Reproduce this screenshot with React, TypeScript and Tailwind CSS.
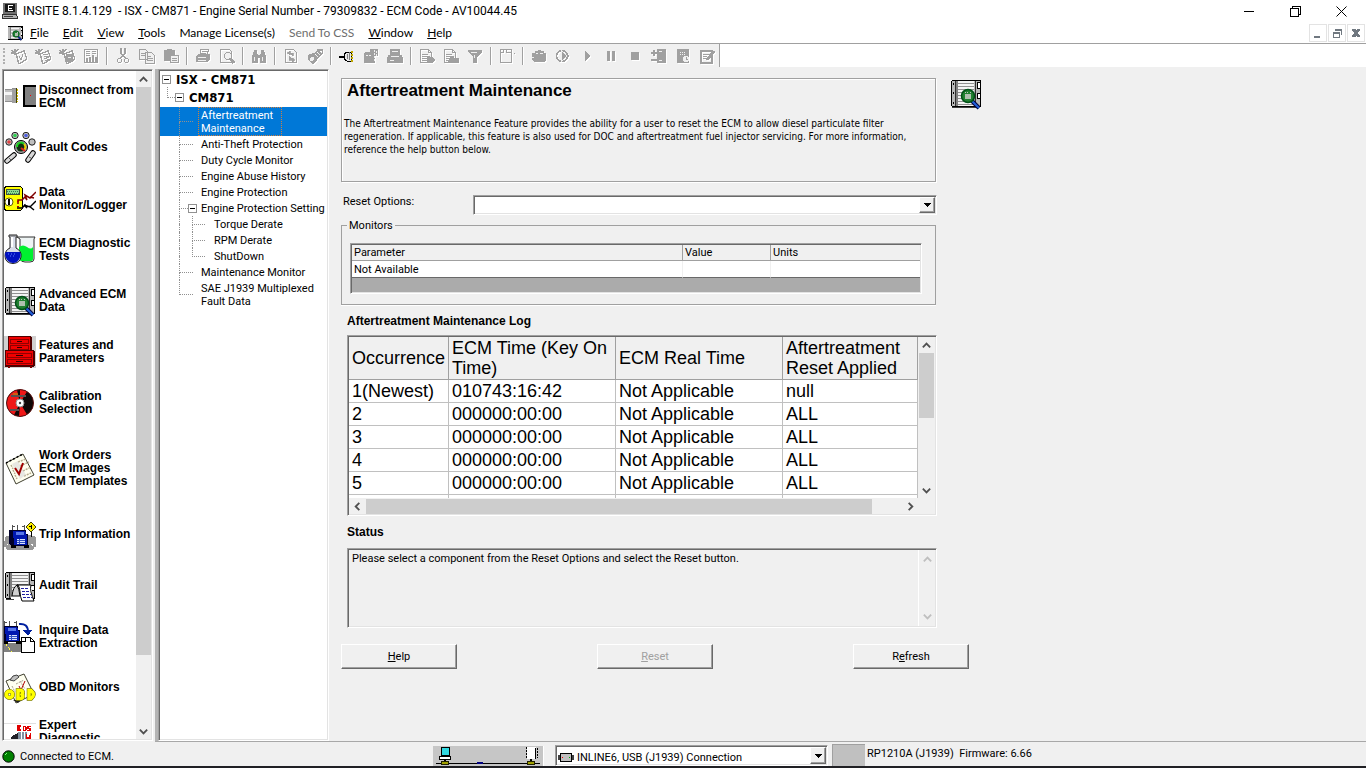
import { useState } from 'react';
import type { ReactNode } from 'react';
import clsx from 'clsx';

const SUNKEN =
  'border border-t-[#a0a0a0] border-l-[#a0a0a0] border-b-white border-r-white shadow-[inset_1px_1px_0_#696969,inset_-1px_-1px_0_#e3e3e3]';
const RAISED =
  'border border-t-white border-l-white border-b-[#696969] border-r-[#696969] shadow-[inset_-1px_-1px_0_#a0a0a0]';
const ETCHED = 'border border-[#a0a0a0] shadow-[1px_1px_0_#fff,inset_1px_1px_0_#fff]';

function Art({ children, className = 'w-8 h-8', box = '0 0 32 32' }: { children: ReactNode; className?: string; box?: string }) {
  return (
    <svg viewBox={box} className={clsx('shrink-0', className)} shapeRendering="crispEdges" fill="none" aria-hidden="true">
      {children}
    </svg>
  );
}

// ---- sidebar drawings (32 x 32) ----

function EcmModule() {
  return (
    <>
      <path d="M2 2h28l1 1v25l-1 1H2l-1-1V3z" fill="#000" />
      <path d="M2 3h28v25H2z" fill="#b8b8b8" />
      <path d="M6 3h2v25H6z" fill="#808080" />
      <path d="M8 3h16v25H8z" fill="#f4f4f4" />
      <path d="M8 5.500h16M8 8.500h16M8 11.500h16M8 14.500h16M8 17.500h16M8 20.500h16M8 23.500h16M8 26.500h16" stroke="#909090" />
      <path d="M5 3h1v25H5zM25 3h1v25h-1z" fill="#303030" />
      <path d="M3 5h1v2H3zM3 14h1v2H3zM3 24h1v2H3zM27 4h3v1h-3zM27 10h3v1h-3zM27 5h1v5h-1zM27 15h3v1h-3zM27 20h3v1h-3zM27 16h1v4h-1z" fill="#000" />
      <path d="M28 5h2v5h-2zM28 16h2v4h-2z" fill="#fff" />
      <path d="M2 29h27v1H2z" fill="#404040" />
    </>
  );
}

function EcmSearch() {
  return (
    <>
      <EcmModule />
      <path d="M22 23l7 7" stroke="#000040" strokeWidth="4" shapeRendering="auto" />
      <path d="M22 23l7 7" stroke="#2060d8" strokeWidth="2" shapeRendering="auto" />
      <circle cx="18" cy="18" r="6.500" fill="#208030" stroke="#005018" strokeWidth="1.500" shapeRendering="auto" />
      <path d="M15 16h6v5h-6z" fill="#b0c0b0" />
      <path d="M15 14h1v1h-1zM17 14h1v1h-1zM20 14h1v1h-1z" fill="#c0c0c0" />
    </>
  );
}

function Plug() {
  return (
    <>
      <path d="M1 9h8v12H1z" fill="#c0c0c0" />
      <path d="M1 11h7v3H1z" fill="#f4f4f4" />
      <path d="M8 7h4v15H8z" fill="#a0a0a0" />
      <path d="M1 8.500h7M1 20.500h7M8 7.500h4" stroke="#909090" />
      <path d="M12 7h1v15h-1z" fill="#404000" />
      <path d="M13.500 8v13" stroke="#d8c000" strokeDasharray="2 1" />
      <path d="M19 4h13v22H19z" fill="#000" />
      <path d="M21 6h11v18H21z" fill="#808080" />
      <path d="M26 14h1v1h-1z" fill="#f00" />
    </>
  );
}

function FaultLamps() {
  const lamps = [
    [5, 10, '#e04040'],
    [11, 3.5, '#30d050'],
    [22, 3.5, '#5060e0'],
    [28, 10, '#c0c0c0'],
  ] as const;
  return (
    <g shapeRendering="auto">
      {lamps.map(([x, y, fill]) => (
        <g key={x}>
          <circle cx={x} cy={y} r="3.200" fill="#c0c0c0" stroke="#202020" />
          <circle cx={x} cy={y} r="1.800" fill={fill} />
        </g>
      ))}
      <circle cx="17" cy="15" r="6.500" fill="#a0a0a0" stroke="#000" />
      <circle cx="17" cy="15" r="4.500" fill="#103010" />
      <path d="M13 15a4 4 0 0 1 7-3" stroke="#20d020" strokeWidth="2" />
      <path d="M20 12a4 4 0 0 1 0 6" stroke="#e8d000" strokeWidth="2" />
      <path d="M17 16l4 3" stroke="#e02020" strokeWidth="2" />
      <path d="M3 29l7-6M24 28l5-7" stroke="#000" strokeWidth="5.500" strokeLinecap="round" />
      <path d="M3 29l7-6M24 28l5-7" stroke="#d8d8d8" strokeWidth="3.500" strokeLinecap="round" />
      <path d="M5 26l2 2M25 25l2 1" stroke="#606060" />
    </g>
  );
}

function Multimeter() {
  return (
    <>
      <path d="M1.500 3.500h15l2 2v20l-2 2h-15l-1-2v-20z" fill="#ffff00" stroke="#000" />
      <path d="M2.500 6.500h13v5h-13z" fill="#90d890" stroke="#405040" />
      <path d="M3 8.500h12M4 10.500h11" stroke="#308050" strokeDasharray="1 1" />
      <circle cx="5" cy="19" r="4" fill="#fff" stroke="#606000" shapeRendering="auto" />
      <path d="M5 16v6" stroke="#000" strokeWidth="2" />
      <path d="M14 21v-4h4l3-3 2 3-2-5 5 3 6-6M26 14l4 1" stroke="#800000" strokeWidth="1.500" shapeRendering="auto" />
      <path d="M13 25h5l3-3 2 3-3-3 6 2 6-6M25 23l5 4" stroke="#000" strokeWidth="1.500" shapeRendering="auto" />
      <path d="M13 18h2M13 23h2" stroke="#c00000" />
    </>
  );
}

function Flasks() {
  return (
    <g shapeRendering="auto">
      <path d="M13 3l3 2v20q1 3 5 3h5q4 0 4-3V5l1-2z" fill="#eef4f4" stroke="#303030" />
      <path d="M15 13q4-3 8 0t6 0v12q0 2-3 2h-8q-3 0-3-3z" fill="#00f030" />
      <path d="M5 1h8v2h-1v11q6 3 5 9t-8 6.500Q1 29 1 22q0-6 5-8V3H5z" fill="#d8dce8" stroke="#202020" />
      <path d="M2 18h14q1.500 4 -1 7.500t-6 3.500q-5-.5-7-5t0-6z" fill="#0010c0" />
      <path d="M4 20h9M6 22h5" stroke="#6080ff" strokeDasharray="1 2" />
      <path d="M8 3v10" stroke="#fff" strokeWidth="2" />
      <path d="M5 2h8" stroke="#606060" />
    </g>
  );
}

function Drawers() {
  return (
    <>
      <path d="M0 0h32v32H0z" fill="#d0d0d0" />
      <path d="M4.500.5h22v14h-22zM1.500 14.500h28v15h-28z" fill="#f00000" stroke="#500000" />
      <path d="M26.500 1v13M29.500 15v15M1 29.500h29" stroke="#500000" strokeWidth="2" />
      <path d="M6.500 3.500h18v4h-18zM6.500 9.500h18v4h-18zM3.500 17.500h24v4h-24zM3.500 23.500h24v4h-24z" stroke="#900000" />
      <path d="M13 5.500h5M13 11.500h5M12 19.500h7M12 25.500h7" stroke="#300000" />
      <path d="M4 30h2v2H4zM26 30h2v2h-2z" fill="#800000" />
    </>
  );
}

function Disc() {
  return (
    <g shapeRendering="auto">
      <circle cx="16" cy="16" r="13.500" fill="#100808" />
      <path d="M16 16L13 3a13.500 13.500 0 0 0-3 25z" fill="#f01818" />
      <path d="M16 16V2.500a13.500 13.500 0 0 1 7 2zM16 16l7 11.500a13.500 13.500 0 0 1-8 2z" fill="#f01818" />
      <path d="M7 8h15v2H7zM6 22h9v2H6z" fill="#585050" />
      <path d="M9 7h5" stroke="#b0a000" />
      <circle cx="16" cy="16" r="4" fill="#fff" stroke="#909090" />
      <circle cx="16" cy="16" r="1.200" fill="#404040" />
      <circle cx="16" cy="16" r="13.500" stroke="#601010" />
    </g>
  );
}

function Checklist() {
  return (
    <g shapeRendering="auto">
      <path d="M2 10L19 1l11 21-18 9z" fill="#fffff0" stroke="#404030" />
      <path d="M2 10L19 1" stroke="#000" strokeWidth="1.500" strokeDasharray="2 2" />
      <path d="M7 12l2 4M9 17l2 4M11 22l2 4M14 9l8-3M16 13l9-4M19 18l8-4M20 23l7-3" stroke="#b8ae90" strokeWidth="1.500" strokeDasharray="2 1" />
      <path d="M8 11l6-3 8 14-6 4z" fill="#d8d8d8" opacity=".6" />
      <path d="M11 15l4 6 4-11" stroke="#a00000" strokeWidth="2" />
    </g>
  );
}

function Truck() {
  return (
    <>
      <path d="M8.500 9V3M13.500 9V3M20.500 9V3M8 4.500h3M18 4.500h3" stroke="#505050" />
      <path d="M5 8h17v4h2v12H7l-2-3z" fill="#000028" />
      <path d="M9 9h12l2 5v9H10z" fill="#0018b0" />
      <path d="M12 10h8v3h-8z" fill="#5878e8" />
      <path d="M13 17h8v5h-8z" fill="#d8e0ff" />
      <path d="M13 18.500h8M13 20.500h8M15.500 17v5" stroke="#3050c0" />
      <path d="M7 23h5v3H7zM20 23h5v3h-5z" fill="#000" />
    </>
  );
}

function Trip() {
  return (
    <>
      <path d="M1 18l5-2h20l6 2v9l-4 4H3l-3-4z" fill="#989898" />
      <path d="M1 30l5-9M31 30l-4-6" stroke="#fff" strokeDasharray="2 2" />
      <g transform="translate(0 3)">
        <Truck />
      </g>
      <path d="M27 3l5 5-5 5-5-5z" fill="#ffee00" stroke="#404000" shapeRendering="auto" />
      <path d="M27 6v4M25 7h3M27.500 13v5" stroke="#000" />
    </>
  );
}

function AuditTrail() {
  return (
    <>
      <EcmModule />
      <path d="M10 16h18v16H15l-6-3H7z" fill="#fff" />
      <path d="M13 15h14q-1 3 0 7t3 9H18q-2-5-2-9t-2-7z" fill="#fff" stroke="#000" shapeRendering="auto" />
      <path d="M13 15q-4 2-5 11h8q-1-8-3-11z" fill="#d0d0d0" stroke="#000" shapeRendering="auto" />
      <path d="M17 18.500h8M18 21.500h8M18 24.500h9M19 27.500h9" stroke="#2020a0" strokeDasharray="3 1" />
    </>
  );
}

function Extraction() {
  return (
    <>
      <path d="M0 22h17v9H0z" fill="#808080" />
      <path d="M1 22l7 9" stroke="#ffff40" strokeDasharray="3 2" />
      <g transform="translate(-8 -3)">
        <Truck />
      </g>
      <path d="M15 3q9-1 9 8" stroke="#0020a0" strokeWidth="2" shapeRendering="auto" />
      <path d="M19 9h9l-4 6z" fill="#0020a0" />
      <path d="M17.500 16.500h9l4 4v11h-13z" fill="#fff" stroke="#000" />
      <path d="M17.500 16.500h4v4h-4zM26.500 16.500v4h4" stroke="#000" />
    </>
  );
}

function Obd() {
  return (
    <g shapeRendering="auto">
      <path d="M2 9L20 2l10 20-18 9z" fill="#fffff0" stroke="#404030" />
      <path d="M6 8l3-4 4-1 2 2-5 4z" fill="#c0c0c0" stroke="#404040" />
      <path d="M8 14l3 6M16 9l5 8M12 12l8-4" stroke="#a8a090" strokeDasharray="2 1" />
      <path d="M15 14l2 4 4-9" stroke="#b00000" />
      <path d="M9 28l5 3 3-3z" fill="#202020" />
      <circle cx="5.500" cy="22.500" r="3.200" stroke="#606000" strokeWidth="4.500" />
      <path d="M14 18.500v8h3q3-1 1-4 2-3-1-4zM25 18.500v8h2q5-4 0-8z" stroke="#606000" strokeWidth="4.500" />
      <circle cx="5.500" cy="22.500" r="3.200" stroke="#ffff00" strokeWidth="3.500" />
      <path d="M14 18.500v8h3q3-1 1-4 2-3-1-4zM25 18.500v8h2q5-4 0-8z" stroke="#ffff00" strokeWidth="3.500" />
    </g>
  );
}

function Expert() {
  return (
    <>
      <path d="M0 .5h32" stroke="#e0e0e0" />
      <path d="M13 3h4M13 5h3M13 7h4M13.500 3v5M19.500 3v5M19 3.500h2l1 1v2l-1 1h-2M27 3.500h-3v2h2v2h-3" stroke="#e00000" strokeWidth="1.500" />
      <path d="M7 14l8-5v15H7z" fill="#202028" />
      <path d="M14 9h9v14h-9z" fill="#8090a0" />
      <path d="M17 9v8M20 9v8" stroke="#fff" />
      <path d="M22 9l2 6 3-6v15h-4z" fill="#e00000" />
      <path d="M0 18h7v8H0z" fill="#d8d8d8" />
    </>
  );
}

const sidebarItems: { lines: string[]; art: ReactNode; tall?: boolean }[] = [
  { lines: ['Disconnect from', 'ECM'], art: <Plug /> },
  { lines: ['Fault Codes'], art: <FaultLamps /> },
  { lines: ['Data', 'Monitor/Logger'], art: <Multimeter /> },
  { lines: ['ECM Diagnostic', 'Tests'], art: <Flasks /> },
  { lines: ['Advanced ECM', 'Data'], art: <EcmSearch /> },
  { lines: ['Features and', 'Parameters'], art: <Drawers /> },
  { lines: ['Calibration', 'Selection'], art: <Disc /> },
  { lines: ['Work Orders', 'ECM Images', 'ECM Templates'], art: <Checklist />, tall: true },
  { lines: ['Trip Information'], art: <Trip /> },
  { lines: ['Audit Trail'], art: <AuditTrail /> },
  { lines: ['Inquire Data', 'Extraction'], art: <Extraction /> },
  { lines: ['OBD Monitors'], art: <Obd /> },
  { lines: ['Expert', 'Diagnostic', '\u00a0'], art: <Expert /> },
];

// ---- toolbar drawings (16 x 16), null is a divider ----

const G = '#a0a0a0';

const page = <path d="M1.500 1.500h8l3 3v10h-11zM9.500 1.500v3h3M3 6.500h6M3 8.500h8M3 10.500h8M3 12.500h5" stroke={G} />;
const tiltedPage = <path d="M5 6l8-3 3 8-8 5zM1 2l2 3M4 1v4M0 5h5M7 1L5 4M3 5l2 2" stroke={G} strokeWidth="1.500" />;

const tools: ({ name: string; art: ReactNode; live?: boolean } | null)[] = [
  { name: 'New work order', art: <>{tiltedPage}<path d="M8 8l2 4 2-6" stroke={G} /></> },
  { name: 'Open work order', art: <>{tiltedPage}<path d="M8 7l5-1M9 9l5-1M9 11l5-2M10 13l4-2" stroke={G} /></> },
  { name: 'Work order image', art: <>{tiltedPage}<path d="M7 6h7v8H7z" fill={G} /><path d="M9 9h3" stroke="#f0f0f0" /></> },
  { name: 'Dashboard', art: <><path d="M1.500 1.500h13v13h-13z" stroke={G} /><path d="M3 3.500h4M3 5.500h4M3 7.500h4M9 3.500h4M9 5.500h4" stroke={G} /><path d="M3 10h2v4H3zM6 9h2v5H6zM9 7h2v7H9zM12 9h2v5h-2z" fill={G} /></> },
  null,
  { name: 'Cut', art: <><path d="M6 0v5l4 5M10 0v5l-4 5" stroke={G} strokeWidth="1.500" /><circle cx="4.500" cy="12.500" r="2" stroke={G} /><circle cx="11.500" cy="12.500" r="2" stroke={G} /></> },
  { name: 'Copy', art: <path d="M.5 1.500h6l2 2v8h-8zM2 5.500h4M2 7.500h4M6.500 4.500h6l3 3v8h-9zM8 8.500h4M8 10.500h6M8 12.500h6" fill="#f0f0f0" stroke={G} /> },
  { name: 'Paste', art: <><path d="M1 2h3V1h5v1h3v11H1z" fill={G} /><path d="M7.500 7.500h8v7h-8z" fill="#f0f0f0" stroke={G} /><path d="M9 10h5M9 12h5" stroke={G} /></> },
  null,
  { name: 'Print', art: <><path d="M5 6l1-5h8l-2 5" stroke={G} /><path d="M7 3h5M6 5h5" stroke={G} /><path d="M3 6h12v5l-3 3H1V9z" fill={G} /><path d="M3 9h8M3 12h8" stroke="#f0f0f0" /></> },
  { name: 'Print preview', art: <><path d="M1.500 1.500h9l2 2v11h-11z" stroke={G} /><circle cx="9" cy="8" r="3.500" stroke={G} fill="#f0f0f0" /><path d="M11 10l4 5" stroke={G} strokeWidth="3" /></> },
  null,
  { name: 'Find', art: <><path d="M3 2h3v3l1 2v8H1V9zM10 2h3l2 7v6H9V7l1-2z" fill={G} /><path d="M6 7h4v3H6z" fill={G} /><path d="M3 9v4M11 9v4" stroke="#f0f0f0" /></> },
  null,
  { name: 'Refresh', art: <><path d="M2.500 1.500h8l3 3v10h-11z" stroke={G} /><path d="M10 8V5H6M4 5l3-2v4zM6 8v4h4M12 12l-3-2v4z" stroke={G} fill={G} strokeWidth=".8" /></> },
  { name: 'Satellite', art: <><path d="M1 7l5-2 5 5-2 4-3 2-5-4z" fill={G} /><path d="M7 7l4-5h5v3l-6 5M9 5l3 3M11 3l3 3" stroke={G} strokeWidth="1.500" /><circle cx="5" cy="11" r="2" fill="#f0f0f0" /></> },
  null,
  { name: 'Connect', live: true, art: <><path d="M0 9h5" stroke="#000" strokeWidth="2" /><path d="M5 6l3-2h4v9H8L5 11z" fill="#e8e8e8" stroke="#000" /><path d="M8 6v5M10 4v8" stroke="#808080" /><path d="M13 3v11" stroke="#c0a800" strokeWidth="2" strokeDasharray="2 1" /></> },
  { name: 'Transfer', art: <><path d="M2 4h5V1h8v7h-3v7H1V7z" fill={G} /><path d="M11.500 2v12M13.500 3v5M3 7.500h5" stroke="#f0f0f0" strokeDasharray="2 1" /></> },
  { name: 'Phone', art: <><path d="M3 1h10v6h2l1 4v4H0v-4l1-4h2z" fill={G} /><path d="M5 3.500h6M4 8.500h8M3 12.500h4" stroke="#f0f0f0" /></> },
  null,
  { name: 'Report', art: <>{page}<path d="M8 9h5l3 3-3 3H8z" fill={G} /></> },
  { name: 'Open report', art: <>{page}<path d="M7 9h3l1 1h5v5H5z" fill={G} /></> },
  { name: 'Filter', art: <><path d="M1 2h14v2l-5 5v6H6V9L1 4z" fill={G} /><path d="M4 4h6M7 7v3" stroke="#f0f0f0" /></> },
  null,
  { name: 'Layout', art: <path d="M1.500 1.500h11v13h-11zM1 4h3V1M7 1v3h5M15 5v1" stroke={G} /> },
  null,
  { name: 'Snapshot', art: <><path d="M1 5h3V3h3V2h3v1h3v2h2v7l-2 2H3l-2-2z" fill={G} /><path d="M5 5h2M9 5h3M1 9h2" stroke="#f0f0f0" /></> },
  { name: 'Record', art: <><circle cx="7" cy="8" r="5.500" stroke={G} strokeWidth="1.500" /><path d="M6 2l6 6-6 6z" fill={G} stroke="#f0f0f0" /><path d="M12 5l2 3-2 3z" fill={G} /></> },
  { name: 'Play', art: <path d="M6 3l5 5-5 5z" fill={G} /> },
  { name: 'Pause', art: <path d="M4 3h3v10H4zM9 3h3v10H9z" fill={G} /> },
  { name: 'Stop', art: <path d="M4 4h8v8H4z" fill={G} /> },
  { name: 'Adjust', art: <><path d="M6 1h9v14H6z" fill={G} /><path d="M0 5h6M3 2v6M0 12h6" stroke={G} strokeWidth="1.500" /><path d="M8 3.500h3M8 12.500h3" stroke="#f0f0f0" /></> },
  { name: 'Schedule', art: <><path d="M2 1h12v14H2z" fill={G} /><path d="M5 4h6M5 6h6" stroke="#f0f0f0" strokeDasharray="1 1" /><circle cx="11" cy="11" r="3" fill="#f0f0f0" /><path d="M11 9v2h2" stroke={G} /></> },
  { name: 'Annotate', art: <><path d="M2 3h11v12H2z" stroke={G} strokeWidth="2" /><path d="M4 6.500h6M4 8.500h4M4 10.500h3" stroke={G} /><path d="M15 3l-7 9" stroke={G} strokeWidth="3" /></> },
];

const menus = [
  { key: 'F', rest: 'ile' },
  { key: 'E', rest: 'dit' },
  { key: 'V', rest: 'iew' },
  { key: 'T', rest: 'ools' },
  { key: '', rest: 'Manage License(s)' },
  { key: '', rest: 'Send To CSS', disabled: true },
  { key: 'W', rest: 'indow' },
  { key: 'H', rest: 'elp' },
];

const leafNodes = ['Anti-Theft Protection', 'Duty Cycle Monitor', 'Engine Abuse History', 'Engine Protection'];
const settingNodes = ['Torque Derate', 'RPM Derate', 'ShutDown'];

const logRows = [
  ['1(Newest)', '010743:16:42', 'Not Applicable', 'null'],
  ['2', '000000:00:00', 'Not Applicable', 'ALL'],
  ['3', '000000:00:00', 'Not Applicable', 'ALL'],
  ['4', '000000:00:00', 'Not Applicable', 'ALL'],
  ['5', '000000:00:00', 'Not Applicable', 'ALL'],
  ['', '', '', ''],
];

function Chevron({ dir, faint }: { dir: 'up' | 'down' | 'left' | 'right'; faint?: boolean }) {
  const d = { up: 'M2 8l4-4 4 4', down: 'M2 4l4 4 4-4', left: 'M8 2L4 6l4 4', right: 'M4 2l4 4-4 4' }[dir];
  return (
    <svg viewBox="0 0 12 12" className="w-[11px] h-[11px] shrink-0" fill="none" stroke={faint ? '#bfbfbf' : '#505050'} strokeWidth="2" aria-hidden="true">
      <path d={d} />
    </svg>
  );
}

function DropArrow() {
  return (
    <span className={clsx('pointer-events-none absolute inset-y-[2px] right-[2px] w-4 flex items-center justify-center bg-[#f0f0f0]', RAISED)}>
      <Art className="w-[7px] h-1" box="0 0 7 4">
        <path d="M0 0h7v1H0zM1 1h5v1H1zM2 2h3v1H2zM3 3h1v1H3z" fill="#000" />
      </Art>
    </span>
  );
}

function Toggle({ open, onClick }: { open: boolean; onClick: () => void }) {
  return (
    <button type="button" aria-label="Toggle branch" onClick={onClick} className="w-[9px] h-[9px] shrink-0 self-center border border-[#919191] bg-white">
      <Art className="w-[7px] h-[7px]" box="0 0 7 7">
        <path d="M1 3h5v1H1z" fill="#000" />
        {!open && <path d="M3 1h1v5H3z" fill="#000" />}
      </Art>
    </button>
  );
}

// dotted connector: a vertical stroke with an optional branch halfway down
function Guide({ className, branch = true, last = false }: { className: string; branch?: boolean; last?: boolean }) {
  return (
    <span className={clsx('flex flex-col shrink-0', className)}>
      <span className={clsx('flex-1 border-l border-dotted border-[#909090]', branch && 'border-b')} />
      <span className={clsx('flex-1', !last && 'border-l border-dotted border-[#909090]')} />
    </span>
  );
}

function Sidebar() {
  return (
    <nav className={clsx('ml-[2px] w-[151px] shrink-0 flex bg-white p-px', SUNKEN)}>
      <ul className="flex-1 min-w-0 overflow-hidden font-bold text-[12px] leading-[13px] font-['Liberation_Sans',Arial,sans-serif]">
        {sidebarItems.map(item => (
          <li key={item.lines[0]} className={item.tall ? 'h-[81px]' : 'h-[51px]'}>
            <button type="button" className="w-full h-full flex items-center gap-[3px] text-left">
              <Art>{item.art}</Art>
              <span className="whitespace-nowrap">
                {item.lines.map(line => (
                  <span key={line} className="block">{line}</span>
                ))}
              </span>
            </button>
          </li>
        ))}
      </ul>
      <div className="w-[15px] shrink-0 flex flex-col bg-[#f0f0f0]">
        <div className="h-4 flex items-center justify-center"><Chevron dir="up" /></div>
        <div className="h-[85%] bg-[#cdcdcd]" />
        <div className="mt-auto h-4 flex items-center justify-center"><Chevron dir="down" /></div>
      </div>
    </nav>
  );
}

function TreePanel() {
  const [open, setOpen] = useState(true);
  const [settingsOpen, setSettingsOpen] = useState(true);

  return (
    <section className={clsx('w-[171px] shrink-0 bg-white p-px text-[11px] leading-[13px] whitespace-nowrap overflow-hidden', SUNKEN)}>
      <div className="flex h-4 pl-[2px] items-center gap-[5px] font-bold font-['DejaVu_Sans_Condensed','DejaVu_Sans',sans-serif] text-[13px]">
        <Toggle open={open} onClick={() => setOpen(!open)} />
        ISX - CM871
      </div>
      {open && (
        <ul>
          <li className="flex h-5 pl-[7px] font-bold font-['DejaVu_Sans_Condensed','DejaVu_Sans',sans-serif] text-[13px]">
            <Guide className="w-[8px]" last />
            <Toggle open onClick={() => setOpen(false)} />
            <span className="self-center ml-[5px]">CM871</span>
          </li>
          <li className="flex h-[29px] pl-[19px] bg-[#0078d7] text-white">
            <Guide className="w-[14px]" />
            <span className="ml-[5px] flex items-center border border-dotted border-[#d08040] pl-[2px] pr-[8px]">
              <span>Aftertreatment<br />Maintenance</span>
            </span>
          </li>
          {leafNodes.map(label => (
            <li key={label} className="flex h-4 pl-[19px]">
              <Guide className="w-[14px]" />
              <span className="self-center ml-[8px]">{label}</span>
            </li>
          ))}
          <li className="flex h-4 pl-[19px]">
            <Guide className="w-[9px]" />
            <Toggle open={settingsOpen} onClick={() => setSettingsOpen(!settingsOpen)} />
            <span className="self-center ml-[4px]">Engine Protection Setting</span>
          </li>
          {settingsOpen && settingNodes.map((label, i) => (
            <li key={label} className="flex h-4 pl-[19px]">
              <Guide className="w-[13px]" branch={false} />
              <Guide className="w-[13px]" last={i === settingNodes.length - 1} />
              <span className="self-center ml-[9px]">{label}</span>
            </li>
          ))}
          <li className="flex h-4 pl-[19px]">
            <Guide className="w-[14px]" />
            <span className="self-center ml-[8px]">Maintenance Monitor</span>
          </li>
          <li className="flex h-[29px] pl-[19px]">
            <Guide className="w-[14px]" last />
            <span className="self-center ml-[8px]">SAE J1939 Multiplexed<br />Fault Data</span>
          </li>
        </ul>
      )}
    </section>
  );
}

function MaintenanceLog() {
  return (
    <div className={clsx('h-[181px] bg-[#f0f0f0] p-px flex flex-col', SUNKEN)}>
      <div className="flex-1 min-h-0 flex">
        <div className="flex-1 min-w-0 overflow-hidden bg-white">
          <table className="w-full table-fixed border-separate border-spacing-0 text-[18px] leading-[20px] text-left font-['Liberation_Sans',Arial,sans-serif]">
            <colgroup>
              <col className="w-[100px]" />
              <col className="w-[167px]" />
              <col className="w-[167px]" />
              <col />
            </colgroup>
            <thead>
              <tr className="h-[43px] bg-[#f0f0f0]">
                {['Occurrence', 'ECM Time (Key On Time)', 'ECM Real Time', 'Aftertreatment Reset Applied'].map(head => (
                  <th key={head} className="border-r border-b border-[#a0a0a0] pl-[3px] font-normal align-middle">{head}</th>
                ))}
              </tr>
            </thead>
            <tbody>
              {logRows.map(row => (
                <tr key={row[0]} className="h-[23px]">
                  {row.map((cell, i) => (
                    <td key={i} className="border-r border-b border-[#c0c0c0] pl-[3px]">{cell}</td>
                  ))}
                </tr>
              ))}
            </tbody>
          </table>
        </div>
        <div className="w-[17px] shrink-0 flex flex-col items-center px-px">
          <div className="h-4 flex items-center"><Chevron dir="up" /></div>
          <div className="h-[65px] w-full bg-[#cdcdcd]" />
          <div className="mt-auto h-4 flex items-center"><Chevron dir="down" /></div>
        </div>
      </div>
      <div className="h-4 shrink-0 flex items-center pr-[17px]">
        <div className="w-[17px] flex justify-center"><Chevron dir="left" /></div>
        <div className="h-[15px] w-[506px] bg-[#cdcdcd]" />
        <div className="ml-auto w-4 flex justify-center"><Chevron dir="right" /></div>
      </div>
    </div>
  );
}

function MaintenancePanel() {
  return (
    <main className="flex-1 min-w-0 pl-[12px] pt-[9px] text-[11px] leading-[13px]">
      <div className="flex items-start">
        <div className="w-full max-w-[596px]">
          <header className={clsx('mr-px h-[104px] px-[2px] pt-[2px]', ETCHED)}>
            <h1 className="pl-[3px] text-[17px] leading-[20px] font-bold font-['Liberation_Sans',Arial,sans-serif]">Aftertreatment Maintenance</h1>
            <p className="mt-4 whitespace-nowrap text-[10px] leading-[13px] font-['DejaVu_Sans_Condensed','DejaVu_Sans',sans-serif]">
              The Aftertreatment Maintenance Feature provides the ability for a user to reset the ECM to allow diesel particulate filter<br />
              regeneration. If applicable, this feature is also used for DOC and aftertreatment fuel injector servicing. For more information,<br />
              reference the help button below.
            </p>
          </header>

          <div className="mt-[13px] flex items-start">
            <label htmlFor="reset-options" className="w-[132px] shrink-0 pl-[2px]">Reset Options:</label>
            <div className="relative flex-1">
              <select id="reset-options" className={clsx('block w-full h-[20px] appearance-none bg-white px-1', SUNKEN)}>
                <option value=""></option>
              </select>
              <DropArrow />
            </div>
          </div>

          <fieldset className="mt-[4px] mr-px h-[86px] px-[8px] pt-[11px] border border-[#a0a0a0] shadow-[0_1px_0_#fff]">
            <legend className="-ml-[3px] px-[2px]">Monitors</legend>
            <div className={clsx('mr-[5px] h-[51px] bg-[#ababab] p-px', SUNKEN)}>
              <table className="w-full table-fixed border-separate border-spacing-0 text-left">
                <colgroup>
                  <col />
                  <col className="w-[88px]" />
                  <col className="w-[149px]" />
                </colgroup>
                <thead>
                  <tr className="h-4 bg-[#f0f0f0]">
                    <th className="border-r border-b border-[#a0a0a0] pl-[2px] font-normal">Parameter</th>
                    <th className="border-r border-b border-[#a0a0a0] pl-[2px] font-normal">Value</th>
                    <th className="border-b border-[#a0a0a0] pl-[2px] font-normal">Units</th>
                  </tr>
                </thead>
                <tbody>
                  <tr className="h-[17px] bg-white">
                    <td className="border-b border-b-[#696969] border-r border-r-[#f0f0f0] pl-[2px]">Not Available</td>
                    <td className="border-b border-b-[#696969] border-r border-r-[#f0f0f0]" />
                    <td className="border-b border-b-[#696969]" />
                  </tr>
                </tbody>
              </table>
            </div>
          </fieldset>

          <div className="pl-[6px] font-['Liberation_Sans',Arial,sans-serif]">
            <h2 className="mt-[10px] mb-[7px] text-[12px] leading-[13px] font-bold">Aftertreatment Maintenance Log</h2>
            <MaintenanceLog />
            <label htmlFor="status" className="block mt-[10px] mb-[9px] text-[12px] leading-[13px] font-bold">Status</label>
            <div className={clsx('h-[80px] flex p-px', SUNKEN)}>
              <textarea
                id="status"
                readOnly
                className="flex-1 resize-none bg-transparent pl-[3px] pt-[2px] outline-none font-[Roboto,sans-serif]"
                value="Please select a component from the Reset Options and select the Reset button."
              />
              <div className="w-[17px] flex flex-col items-center justify-between py-1 border-l border-white">
                <Chevron dir="up" faint />
                <Chevron dir="down" faint />
              </div>
            </div>
          </div>
        </div>
        <Art className="ml-[13px] w-8 h-8"><EcmSearch /></Art>
      </div>

      <div className="mt-4 max-w-[628px] flex justify-between">
        <button type="button" className={clsx('w-[116px] h-[25px]', RAISED)}><u>H</u>elp</button>
        <button type="button" disabled className={clsx('w-[116px] h-[25px] text-[#a0a0a0]', RAISED)}><u>R</u>eset</button>
        <button type="button" className={clsx('w-[116px] h-[25px]', RAISED)}>R<u>e</u>fresh</button>
      </div>
    </main>
  );
}

function StatusBar() {
  return (
    <footer className="h-[26px] shrink-0 flex border-b-2 border-[#202024] text-[11px] leading-[13px]">
      <div className="w-[433px] shrink-0 flex items-center gap-[5px] pl-[2px] pt-[4px]">
        <Art className="w-[13px] h-[13px]" box="0 0 13 13">
          <circle cx="6.500" cy="6.500" r="5.700" fill="#008000" stroke="#000" shapeRendering="auto" />
          <path d="M3 5l2-2" stroke="#80ff80" />
        </Art>
        Connected to ECM.
      </div>
      <div className="w-[111px] shrink-0 mt-[4px] bg-[#c6c6c6] border-r border-white">
        <Art className="w-[110px] h-5" box="0 0 110 20">
          <path d="M8.500 1.500h8v8h-8z" fill="#30d8e0" stroke="#000" />
          <path d="M6.500 10.500h11v3h-11z" fill="#fff" stroke="#000" />
          <path d="M12 13v3M98 13v3" stroke="#000" strokeWidth="2" />
          <path d="M3 17.500h104" stroke="#000" />
          <path d="M8.500 15.500h7v3h-7zM94.500 15.500h7v3h-7z" fill="#a0a000" stroke="#202000" />
          <path d="M94 1h9v12h-9z" fill="#fff" />
          <path d="M93.500 1v12M104.500 2v10" stroke="#000" strokeDasharray="2 1" />
          <path d="M102.500 2v11" stroke="#000" />
          <path d="M44 16h6v2h-6z" fill="#000080" />
        </Art>
      </div>
      <div className="relative ml-[11px] mt-[3px] w-[273px] shrink-0">
        <select aria-label="Adapter connection" className={clsx('block w-full h-[21px] appearance-none bg-white pl-[21px] pt-[3px]', SUNKEN)}>
          <option>INLINE6, USB (J1939) Connection</option>
        </select>
        <Art className="absolute left-[3px] top-[7px] w-4 h-[11px]" box="0 0 16 11">
          <path d="M2.500 1.500h11v8h-11z" fill="#c0c0c0" stroke="#000" />
          <path d="M0 3h2v5H0zM14 3h2v5h-2z" fill="#404040" />
          <path d="M4 5h1v1H4z" fill="#f00" />
          <path d="M11 5h1v1h-1z" fill="#0a0" />
        </Art>
        <DropArrow />
      </div>
      <div className="ml-[4px] mt-[2px] w-[33px] shrink-0 bg-[#c0c0c0] border-t border-l border-[#a0a0a0]" />
      <div className="ml-[2px] mt-[5px] whitespace-pre">RP1210A (J1939)  Firmware: 6.66</div>
    </footer>
  );
}

export default function App() {
  return (
    <div className="h-screen flex flex-col overflow-hidden bg-[#f0f0f0] text-black font-[Roboto,sans-serif] cursor-default">
      <div className="h-[22px] shrink-0 flex items-center bg-white pl-[2px] pr-[2px] text-[12px]">
        <Art className="w-4 h-4" box="0 0 16 16">
          <path d="M1 0h14v11H1z" fill="#707070" />
          <path d="M3 1h10v8H3z" fill="#181818" />
          <path d="M11 2.500H6v5h5M7 5h3" stroke="#fff" />
          <path d="M1 11h13l2 4H0z" fill="#b0b0b0" stroke="#303030" />
          <path d="M2 13h9" stroke="#404040" />
        </Art>
        <h1 className="ml-[5px] whitespace-pre">INSITE 8.1.4.129  - ISX - CM871 - Engine Serial Number - 79309832 - ECM Code - AV10044.45</h1>
        <div className="ml-auto flex">
          <button type="button" aria-label="Minimize" className="w-[46px] flex justify-center">
            <Art className="w-[11px] h-[11px]" box="0 0 11 11"><path d="M0 5.500h10" stroke="#000" /></Art>
          </button>
          <button type="button" aria-label="Restore" className="w-[46px] flex justify-center">
            <Art className="w-[11px] h-[11px]" box="0 0 11 11"><path d="M.5 2.500h8v8h-8zM2.500 2.500v-2h8v8h-2" stroke="#000" /></Art>
          </button>
          <button type="button" aria-label="Close" className="w-[46px] flex justify-center">
            <Art className="w-[11px] h-[11px]" box="0 0 11 11"><path d="M.5.5l10 10M10.500.5l-10 10" stroke="#000" shapeRendering="auto" /></Art>
          </button>
        </div>
      </div>

      <div className="h-[22px] shrink-0 flex items-center bg-white border-b border-[#a0a0a0] pl-[7px] pr-px text-[12px] font-[Lato,sans-serif]">
        <Art className="w-4 h-4"><EcmSearch /></Art>
        <div className="flex">
          {menus.map(m => (
            <button key={m.rest} type="button" disabled={m.disabled} className={clsx('px-[7px]', m.disabled && 'text-[#6d6d6d]')}>
              {m.key && <u>{m.key}</u>}{m.rest}
            </button>
          ))}
        </div>
        <div className="ml-auto flex gap-px">
          {[
            ['Minimize document', 'M4 11h6v2H4z'],
            ['Restore document', 'M4 7h7v6H4zM5 9v3h5V9zM6 4h7v6h-1V6H6z'],
            ['Close document', 'M4 4h3l1 1 1-1h3v1l-2 3 2 3v1H9l-1-1-1 1H4v-1l2-3-2-3z'],
          ].map(([name, d]) => (
            <button key={name} type="button" aria-label={name} className="w-[18px] h-[18px] border border-[#e3e3e3] flex items-center justify-center">
              <Art className="w-4 h-4" box="0 0 16 16"><path d={d} fill="#707880" fillRule="evenodd" /></Art>
            </button>
          ))}
        </div>
      </div>

      <div className="h-[23px] shrink-0 flex bg-white">
        <div className="flex items-center bg-[#f0f0f0] border-r border-[#a0a0a0]">
          <div className="ml-[3px] mr-[2px] h-[16px] border-l-2 border-dotted border-[#b0b0b0]" />
          <div className="flex items-center">
            {tools.map((tool, i) =>
              tool ? (
                <button key={i} type="button" aria-label={tool.name} disabled={!tool.live} className="w-6 h-[22px] flex items-center justify-center">
                  <Art className={clsx('w-4 h-4', !tool.live && 'drop-shadow-[1px_1px_0_#fff]')} box="0 0 16 16">{tool.art}</Art>
                </button>
              ) : (
                <span key={i} className="mx-[3px] w-[2px] h-[18px] border-l border-l-[#a0a0a0] border-r border-r-white" />
              )
            )}
          </div>
        </div>
      </div>

      <div className="flex-1 min-h-0 pt-[2px] flex">
        <Sidebar />
        <div className="ml-[2px] w-[3px] bg-[#b4b4b4]" />
        <TreePanel />
        <MaintenancePanel />
      </div>
      <div className="h-px shrink-0 ml-[155px] bg-[#a8a8a8]" />
      <StatusBar />
    </div>
  );
}
